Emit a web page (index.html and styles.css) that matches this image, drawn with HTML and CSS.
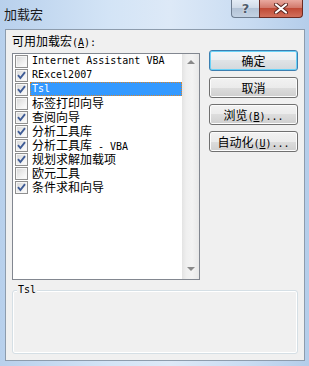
FILE: index.html
```html
<!DOCTYPE html>
<html lang="zh-CN">
<head>
<meta charset="UTF-8">
<title>加载宏</title>
<link rel="stylesheet" href="styles.css">
</head>
<body>

<div class="window">
    <div class="titlebar">
        <span class="title">加载宏</span>
        <div class="caption">
            <span class="cap help">?</span>
            <span class="cap close">
                <svg width="14" height="11" viewBox="0 0 14 11">
                    <path d="M2 1.5 L12 9.5 M12 1.5 L2 9.5" stroke="#5a2620" stroke-width="4" stroke-linecap="round"/>
                    <path d="M2 1.5 L12 9.5 M12 1.5 L2 9.5" stroke="#fff" stroke-width="2.2" stroke-linecap="round"/>
                </svg>
            </span>
        </div>
    </div>

    <div class="client">
        <div class="main">
            <div class="left">
                <div class="label">可用加载宏<span class="en">(<u>A</u>):</span></div>
                <div class="listbox">
                    <ul class="items">
                        <li><span class="cb"></span><span class="text en">Internet Assistant VBA</span></li>
                        <li><span class="cb on"></span><span class="text en">RExcel2007</span></li>
                        <li><span class="cb on"></span><span class="text en selected">Tsl</span></li>
                        <li><span class="cb"></span><span class="text">标签打印向导</span></li>
                        <li><span class="cb on"></span><span class="text">查阅向导</span></li>
                        <li><span class="cb on"></span><span class="text">分析工具库</span></li>
                        <li><span class="cb on"></span><span class="text">分析工具库<span class="en"> - VBA</span></span></li>
                        <li><span class="cb on"></span><span class="text">规划求解加载项</span></li>
                        <li><span class="cb"></span><span class="text">欧元工具</span></li>
                        <li><span class="cb on"></span><span class="text">条件求和向导</span></li>
                    </ul>
                    <div class="scrollbar">
                        <span class="arrow up"></span>
                        <span class="arrow down"></span>
                    </div>
                </div>
            </div>

            <div class="buttons">
                <button class="btn default">确定</button>
                <button class="btn">取消</button>
                <button class="btn">浏览<span class="en">(<u>B</u>)...</span></button>
                <button class="btn">自动化<span class="en">(<u>U</u>)...</span></button>
            </div>
        </div>

        <div class="group">
            <span class="group-title en">Tsl</span>
        </div>
    </div>
</div>

<script>
    // checkmarks for the ticked boxes
    document.querySelectorAll('.cb.on').forEach(box => {
        box.innerHTML = '<svg width="11" height="11" viewBox="0 0 11 11"><path d="M2 5.2 L4.4 8 L9 2.2" stroke="#3f5c96" stroke-width="1.9" fill="none"/></svg>';
    });
</script>

</body>
</html>
```

FILE: styles.css
```css
body {
    margin: 0;
    padding: 0;
    font-family: "Noto Sans CJK SC", sans-serif;
    font-size: 12px;
    color: #000;
}
.en {
    font-family: "DejaVu Sans Mono", "Liberation Mono", monospace;
    font-size: 10px;
}
.window {
    width: 309px;
    height: 366px;
    display: flex;
    flex-direction: column;
    background: linear-gradient(to right, #b8d0ec 0%, #d3e4f6 35%, #dde9f7 55%, #c9dcf2 80%, #b4cdea 100%);
}
.titlebar {
    height: 29px;
    display: flex;
    justify-content: space-between;
    align-items: flex-start;
}
.title {
    margin: 5px 0 0 4px;
    line-height: 18px;
    font-size: 13px;
    color: #1a1a1a;
}
.caption {
    display: flex;
    margin-right: 6px;
}
.cap {
    height: 18px;
    display: flex;
    align-items: center;
    justify-content: center;
    border: 1px solid #6d7d90;
    border-top: none;
    box-sizing: border-box;
}
.help {
    width: 28px;
    border-radius: 0 0 0 4px;
    border-right: none;
    background: linear-gradient(#e4ecf5 0%, #d0dbe8 45%, #b3c3d6 50%, #c3d2e3 100%);
    font-family: "DejaVu Sans", sans-serif;
    font-size: 13px;
    font-weight: bold;
    color: #4f5c6c;
    text-shadow: 0 0 2px #fff;
}
.close {
    width: 44px;
    border-radius: 0 0 4px 0;
    border-color: #6c2a22;
    background: linear-gradient(#e9a99f 0%, #d27a6c 45%, #c04a36 50%, #d2705c 100%);
}
.client {
    height: 332px;
    margin: 0 4px 0 5px;
    box-sizing: border-box;
    border: 1px solid #8d9cad;
    background-color: #f0f0f0;
    padding: 4px 0 0 6px;
}
.main {
    display: flex;
    align-items: flex-start;
}
.label {
    line-height: 14px;
    margin-bottom: 3px;
}
.listbox {
    width: 188px;
    height: 227px;
    box-sizing: border-box;
    border: 1px solid #828790;
    background-color: white;
    display: flex;
}
.items {
    list-style: none;
    margin: 0;
    padding: 0;
    flex: 1;
}
.items li {
    height: 14px;
    display: flex;
    align-items: flex-start;
}
.cb {
    width: 13px;
    height: 13px;
    margin: 1px 0 0 2px;
    box-sizing: border-box;
    border: 1px solid #8f8f8f;
    background: linear-gradient(135deg, #d6d6d6 0%, #f4f4f4 70%, #ffffff 100%);
    box-shadow: inset 0 0 0 1px #f6f6f6;
    display: flex;
}
.text {
    flex: 1;
    margin-left: 2px;
    padding-left: 2px;
    height: 14px;
    line-height: 14px;
    white-space: nowrap;
}
.text .en {
    line-height: 14px;
}
.selected {
    background-color: #3399ff;
    color: white;
    outline: 1px dotted #d8862c;
    outline-offset: -1px;
}
.scrollbar {
    width: 17px;
    background: linear-gradient(to right, #e3e3e3 0%, #efefef 25%, #f3f3f3 60%, #e8e8e8 100%);
    display: flex;
    flex-direction: column;
    justify-content: space-between;
    align-items: center;
    padding: 6px 0 8px;
}
.arrow {
    width: 0;
    height: 0;
    border-left: 4px solid transparent;
    border-right: 4px solid transparent;
}
.arrow.up {
    border-bottom: 4px solid #8a8a8a;
}
.arrow.down {
    border-top: 4px solid #8a8a8a;
}
.buttons {
    display: flex;
    flex-direction: column;
    gap: 6px;
    margin: 16px 0 0 9px;
}
.btn {
    width: 89px;
    height: 21px;
    padding: 0;
    font-family: "Noto Sans CJK SC", sans-serif;
    font-size: 12px;
    color: #000;
    border: 1px solid #707070;
    border-radius: 3px;
    background: linear-gradient(#f2f2f2 0%, #ebebeb 50%, #dddddd 50%, #cfcfcf 100%);
    box-shadow: inset 0 0 0 1px #fcfcfc;
}
.btn.default {
    border-color: #3c7fb1;
    box-shadow: inset 0 0 0 1px #6ad2f7;
    background: linear-gradient(#f3f6f8 0%, #eceff1 50%, #dfe3e6 50%, #d3d8dc 100%);
}
.group {
    width: 286px;
    height: 64px;
    margin-top: 10px;
    box-sizing: border-box;
    border: 1px solid #d5dfe5;
    border-radius: 3px;
    box-shadow: inset 0 0 0 1px #ffffff;
}
.group-title {
    display: inline-block;
    margin: -7px 0 0 4px;
    padding: 0 1px;
    line-height: 12px;
    background-color: #f0f0f0;
    vertical-align: top;
}
```
